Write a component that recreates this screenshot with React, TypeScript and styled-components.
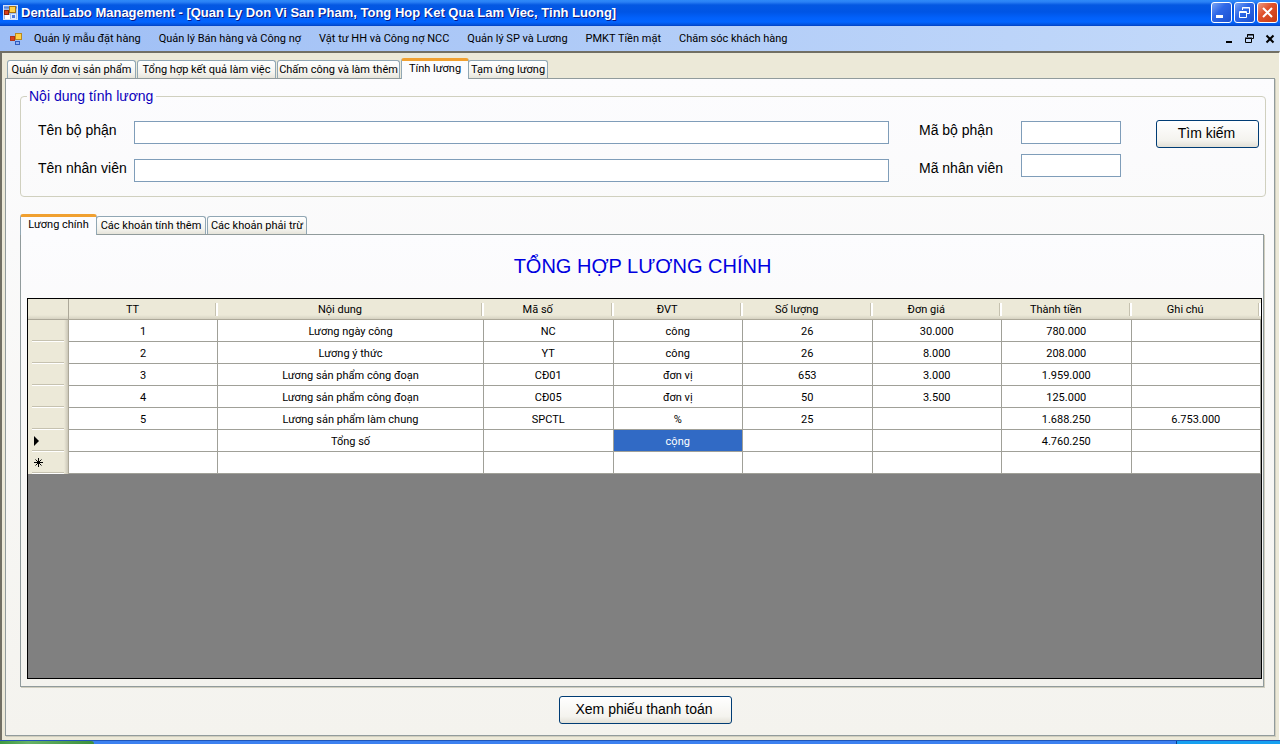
import React from 'react';
import styled, { createGlobalStyle, css } from 'styled-components';

const GlobalStyle = createGlobalStyle`
  * { box-sizing: border-box; }
  body {
    margin: 0;
    background: #ece9d8;
    color: #000;
    font-family: Roboto, "Liberation Sans", Arial, sans-serif;
    font-size: 11px;
    line-height: 14px;
  }
  button, input { font-family: inherit; color: inherit; }
`;

const Window = styled.div`
  min-height: 100vh;
  display: flex;
  flex-direction: column;
`;

const TitleBar = styled.header`
  display: flex;
  align-items: center;
  height: 26px;
  padding: 0 2px 1px 3px;
  color: #fff;
  background: linear-gradient(#2f8af8 0, #2a80f5 2px, #0458e2 5px, #0055e5 12px, #0261fb 18px, #0265ff 22px, #0350d8 25px, #003ec0 26px);
`;

const Title = styled.h1`
  flex: 1;
  margin: 0 0 0 3px;
  font-family: "Liberation Sans", Arial, sans-serif;
  font-size: 13px;
  font-weight: 700;
  line-height: 16px;
  white-space: nowrap;
  text-shadow: 1px 1px 0 #0a1883;
`;

const CaptionButtons = styled.div`
  display: flex;
  gap: 2px;
`;

const CaptionButton = styled.button<{ $danger?: boolean }>`
  display: flex;
  width: 21px;
  height: 21px;
  padding: 0;
  border: 1px solid #fff;
  border-radius: 3px;
  background: ${(p) =>
    p.$danger
      ? 'linear-gradient(135deg, #eb9a83, #e0522c 40%, #c63a12)'
      : 'linear-gradient(135deg, #7ba5f4, #2f68e8 40%, #1b50cf)'};
`;

const MenuBar = styled.nav`
  display: flex;
  align-items: center;
  height: 25px;
  padding: 0 4px 0 8px;
  background: linear-gradient(90deg, #9ebef5, #c4dafa);
`;

const MenuItems = styled.div`
  display: flex;
  flex: 1;
  gap: 18px;
  margin-left: 10px;
`;

const MenuLink = styled.a`
  color: #000;
  text-decoration: none;
  white-space: nowrap;
`;

const MdiButtons = styled.div`
  display: flex;
  gap: 8px;
`;

const MdiButton = styled.button`
  display: flex;
  width: 12px;
  height: 12px;
  padding: 0;
  border: 0;
  background: none;
`;

const Workspace = styled.main`
  display: flex;
  flex: 1;
  flex-direction: column;
  padding: 6px 4px 4px 3px;
  border: solid #716f64;
  border-width: 2px 1px 0 2px;
  border-right-color: #fff;
  background: #ece9d8;
`;

const TabStrip = styled.div<{ $inner?: boolean }>`
  display: flex;
  align-items: flex-end;
  height: 21px;
  margin: ${(p) => (p.$inner ? '17px 0 -1px' : '-1px 0 -1px')};
  padding-left: ${(p) => (p.$inner ? 0 : 2)}px;
`;

const Tab = styled.button<{ $width: number; $active?: boolean }>`
  width: ${(p) => p.$width}px;
  height: 19px;
  padding: 1px 0 0;
  border: 1px solid #91a7b4;
  border-bottom-color: #919b9c;
  border-radius: 3px 3px 0 0;
  background: linear-gradient(#fff, #f4f3ee 70%, #e6e4da);
  font-size: 11px;
  line-height: 14px;
  white-space: nowrap;
  & + & { margin-left: 1px; }
  ${(p) =>
    p.$active &&
    css`
      position: relative;
      height: 21px;
      padding: 0 0 2px;
      border-top: 3px solid #f0a030;
      border-bottom: 0;
      background: #fcfcfe;
      && { margin: 0 -2px 0 0; }
    `}
`;

const Page = styled.section`
  display: flex;
  flex: 1;
  flex-direction: column;
  padding: 8px 8px 11px 14px;
  border: 1px solid #919b9c;
  box-shadow: 1px 1px 0 #d0cebf;
  background: linear-gradient(#fcfcfe, #f4f3ee);
`;

const Group = styled.fieldset`
  display: flex;
  min-width: 0;
  margin: 0;
  padding: 15px 6px 14px 17px;
  border: 1px solid #d0d0bf;
  border-radius: 4px;
  font-family: "Liberation Sans", Arial, sans-serif;
  font-size: 14px;
  line-height: 20px;
`;

const Legend = styled.legend`
  margin-left: -11px;
  padding: 0 3px 0 2px;
  line-height: 18px;
  color: #0c00bc;
`;

const LabelColumn = styled.div<{ $width: number }>`
  display: flex;
  flex-direction: column;
  gap: 18px;
  width: ${(p) => p.$width}px;
  white-space: nowrap;
`;

const InputColumn = styled.div<{ $gap: number; $width?: number }>`
  display: flex;
  flex-direction: column;
  gap: ${(p) => p.$gap}px;
  padding-top: 1px;
  ${(p) => (p.$width ? `width: ${p.$width}px;` : 'flex: 1; margin-right: 30px;')}
`;

const TextInput = styled.input`
  width: 100%;
  height: 23px;
  padding: 2px 4px;
  border: 1px solid #7f9db9;
  background: #fff;
  font-size: 14px;
`;

const PushButton = styled.button<{ $width: number }>`
  width: ${(p) => p.$width}px;
  height: 28px;
  padding: 0 2px 2px 0;
  border: 1px solid #003c74;
  border-radius: 3px;
  background: linear-gradient(#fff, #f4f3ee 75%, #e2e0d6);
  font-family: "Liberation Sans", Arial, sans-serif;
  font-size: 14px;
  line-height: 20px;
  white-space: nowrap;
`;

const SearchSlot = styled.div`
  margin-left: 35px;
`;

const Lower = styled.div`
  display: flex;
  flex: 1;
  flex-direction: column;
  margin-right: 2px;
`;

const InnerPage = styled.section`
  display: flex;
  flex: 1;
  flex-direction: column;
  padding: 0 1px 7px 6px;
  border: 1px solid #919b9c;
  box-shadow: 1px 1px 0 #d0cebf;
  background: linear-gradient(#fcfcfe, #f4f3ee);
`;

const Heading = styled.h2`
  margin: 0;
  padding: 17px 4px 18px 0;
  font-family: "Liberation Sans", Arial, sans-serif;
  font-size: 20px;
  font-weight: 400;
  line-height: 28px;
  text-align: center;
  color: #0000e0;
`;

const GridArea = styled.div`
  flex: 1;
  border: 1px solid #000;
  background: #808080;
`;

const Grid = styled.table`
  width: 100%;
  table-layout: fixed;
  border-collapse: separate;
  border-spacing: 0;
`;

const ColumnHeader = styled.th`
  position: relative;
  height: 21px;
  padding: 2px 22px 0 0;
  border-bottom: 1px solid #aca899;
  background: linear-gradient(#ece9d8 16px, #d6d2c2 20px);
  font-weight: 400;
  &::after {
    content: "";
    position: absolute;
    top: 4px;
    right: 0;
    width: 2px;
    height: 13px;
    border-left: 1px solid #c6c2b0;
    background: #fff;
  }
`;

const CornerCell = styled.td`
  height: 21px;
  padding: 0;
  border-right: 1px solid #aca899;
  border-bottom: 1px solid #aca899;
  background: linear-gradient(#ece9d8 16px, #d6d2c2 20px);
`;

const RowHeader = styled.th`
  height: 22px;
  padding: 0 4px;
  border-right: 1px solid #aca899;
  background: linear-gradient(90deg, transparent 36px, #cbc7b8 40px), #ece9d8;
`;

const RowMark = styled.div`
  display: flex;
  align-items: center;
  height: 22px;
  border-bottom: 1px solid #fff;
  box-shadow: inset 0 -1px 0 #c6c2b0;
`;

const Cell = styled.td<{ $selected?: boolean }>`
  height: 22px;
  padding: 2px 0 0;
  border-right: 1px solid #a0a098;
  border-bottom: 1px solid #a0a098;
  background: ${(p) => (p.$selected ? '#316ac5' : '#fff')};
  color: ${(p) => (p.$selected ? '#fff' : '#000')};
  text-align: center;
  white-space: nowrap;
`;

const Footer = styled.footer`
  display: flex;
  justify-content: center;
  margin: 9px 0 0 4px;
`;

const Taskbar = styled.div`
  display: flex;
  height: 4px;
  border-top: 1px solid #1f55b8;
  background: #3c81f0;
`;

const StartEdge = styled.div`
  width: 94px;
  border-top-right-radius: 4px;
  background: linear-gradient(90deg, #3f9a3f, #66b266 30%, #3c913c);
`;

const TrayEdge = styled.div`
  width: 104px;
  margin-left: auto;
  border-left: 1px solid #0a3f8c;
  background: #16a0f0;
`;

const AppIcon = () => (
  <svg width="15" height="15" viewBox="0 0 15 15" aria-hidden="true">
    <rect x=".5" y=".5" width="14" height="14" fill="#9fbcee" stroke="#d5e2fa" />
    <path d="M1 2.5h13" stroke="#5586dd" strokeWidth="2" />
    <rect x="2" y="10" width="5" height="4" fill="#fff" />
    <rect x="1.5" y="5.500" width="4" height="4" fill="#d8401c" stroke="#8c2410" />
    <rect x="6.500" y="1.5" width="6" height="6" fill="#ffd24a" stroke="#a87410" />
    <rect x="8.5" y="9.5" width="4" height="4" fill="#4a78e0" stroke="#dfe8fb" />
  </svg>
);

const DocIcon = () => (
  <svg width="16" height="16" viewBox="0 0 16 16" aria-hidden="true">
    <rect x="2.5" y="5.5" width="4" height="4" fill="#d8401c" stroke="#b03418" />
    <rect x="7.5" y="2.5" width="6" height="6" fill="#ffd24a" stroke="#b88a20" />
    <rect x="7.5" y="10.5" width="4" height="3" fill="#8fb0f4" stroke="#2f5cc0" />
  </svg>
);

type Glyph = 'minimize' | 'restore' | 'close';

const captionPaths: Record<Glyph, React.ReactNode> = {
  minimize: <path d="M4 13.5h7" stroke="#fff" strokeWidth="3" />,
  restore: (
    <g fill="none" stroke="#fff">
      <path d="M7.5 7V4.5h7v6H12" />
      <path d="M7 5h8" />
      <path d="M4.500 8.500h7v6h-7zM4 9.500h8" />
    </g>
  ),
  close: <path d="M5 5l9 9M14 5l-9 9" stroke="#fff" strokeWidth="2" />,
};

const mdiPaths: Record<Glyph, React.ReactNode> = {
  minimize: <path d="M2 9h6" stroke="#000" strokeWidth="2" />,
  restore: (
    <g fill="none" stroke="#000">
      <path d="M3.500 4V1.500h6v4H8M3 2h7" />
      <path d="M1.500 5.500h6v4h-6zM1 5h7" />
    </g>
  ),
  close: <path d="M2.500 2.500l7 7M9.500 2.500l-7 7" stroke="#000" strokeWidth="2" />,
};

const glyphs: { id: Glyph; label: string }[] = [
  { id: 'minimize', label: 'Minimize' },
  { id: 'restore', label: 'Restore' },
  { id: 'close', label: 'Close' },
];

const menus = [
  'Quản lý mẫu đặt hàng',
  'Quản lý Bán hàng và Công nợ',
  'Vật tư HH và Công nợ NCC',
  'Quản lý SP và Lương',
  'PMKT Tiền mặt',
  'Chăm sóc khách hàng',
];

const mainTabs = [
  { label: 'Quản lý đơn vị sản phẩm', width: 129 },
  { label: 'Tổng hợp kết quả làm việc', width: 139 },
  { label: 'Chấm công và làm thêm', width: 123 },
  { label: 'Tính lương', width: 68, active: true },
  { label: 'Tạm ứng lương', width: 80 },
];

const salaryTabs = [
  { label: 'Lương chính', width: 77, active: true },
  { label: 'Các khoản tính thêm', width: 110 },
  { label: 'Các khoản phải trừ', width: 100 },
];

const columns = ['TT', 'Nội dung', 'Mã số', 'ĐVT', 'Số lượng', 'Đơn giá', 'Thành tiền', 'Ghi chú'];

const rows = [
  ['1', 'Lương ngày công', 'NC', 'công', '26', '30.000', '780.000', ''],
  ['2', 'Lương ý thức', 'YT', 'công', '26', '8.000', '208.000', ''],
  ['3', 'Lương sản phẩm công đoạn', 'CĐ01', 'đơn vị', '653', '3.000', '1.959.000', ''],
  ['4', 'Lương sản phẩm công đoạn', 'CĐ05', 'đơn vị', '50', '3.500', '125.000', ''],
  ['5', 'Lương sản phẩm làm chung', 'SPCTL', '%', '25', '', '1.688.250', '6.753.000'],
  ['', 'Tổng số', '', 'cộng', '', '', '4.760.250', ''],
  ['', '', '', '', '', '', '', ''],
];

const CURRENT_ROW = 5;
const NEW_ROW = 6;
const SELECTED_COLUMN = 3;

const RowGlyph = ({ row }: { row: number }) => {
  if (row === CURRENT_ROW) {
    return (
      <svg width="10" height="10" viewBox="0 0 10 10" aria-label="Current row">
        <path d="M2 0v10l5-5z" />
      </svg>
    );
  }
  if (row === NEW_ROW) {
    return (
      <svg width="11" height="11" viewBox="0 0 11 11" aria-label="New row">
        <path d="M6.500 1v9M2 5.500h9M3.500 2.500l6 6M9.500 2.500l-6 6" stroke="#000" />
      </svg>
    );
  }
  return null;
};

export default function App() {
  return (
    <Window>
      <GlobalStyle />
      <TitleBar>
        <AppIcon />
        <Title>DentalLabo Management - [Quan Ly Don Vi San Pham, Tong Hop Ket Qua Lam Viec, Tinh Luong]</Title>
        <CaptionButtons>
          {glyphs.map((g) => (
            <CaptionButton key={g.id} type="button" aria-label={g.label} $danger={g.id === 'close'}>
              <svg width="19" height="19" viewBox="0 0 19 19">{captionPaths[g.id]}</svg>
            </CaptionButton>
          ))}
        </CaptionButtons>
      </TitleBar>
      <MenuBar>
        <DocIcon />
        <MenuItems>
          {menus.map((m) => (
            <MenuLink key={m} href="#">{m}</MenuLink>
          ))}
        </MenuItems>
        <MdiButtons>
          {glyphs.map((g) => (
            <MdiButton key={g.id} type="button" aria-label={`${g.label} document`}>
              <svg width="12" height="12" viewBox="0 0 12 12">{mdiPaths[g.id]}</svg>
            </MdiButton>
          ))}
        </MdiButtons>
      </MenuBar>
      <Workspace>
        <TabStrip role="tablist">
          {mainTabs.map((t) => (
            <Tab key={t.label} type="button" role="tab" aria-selected={!!t.active} $width={t.width} $active={t.active}>
              {t.label}
            </Tab>
          ))}
        </TabStrip>
        <Page>
          <Group>
            <Legend>Nội dung tính lương</Legend>
            <LabelColumn $width={96}>
              <label htmlFor="dept-name">Tên bộ phận</label>
              <label htmlFor="staff-name">Tên nhân viên</label>
            </LabelColumn>
            <InputColumn $gap={15}>
              <TextInput id="dept-name" />
              <TextInput id="staff-name" />
            </InputColumn>
            <LabelColumn $width={102}>
              <label htmlFor="dept-code">Mã bộ phận</label>
              <label htmlFor="staff-code">Mã nhân viên</label>
            </LabelColumn>
            <InputColumn $gap={10} $width={100}>
              <TextInput id="dept-code" />
              <TextInput id="staff-code" />
            </InputColumn>
            <SearchSlot>
              <PushButton type="button" $width={103}>Tìm kiếm</PushButton>
            </SearchSlot>
          </Group>
          <Lower>
            <TabStrip role="tablist" $inner>
              {salaryTabs.map((t) => (
                <Tab key={t.label} type="button" role="tab" aria-selected={!!t.active} $width={t.width} $active={t.active}>
                  {t.label}
                </Tab>
              ))}
            </TabStrip>
            <InnerPage>
              <Heading>TỔNG HỢP LƯƠNG CHÍNH</Heading>
              <GridArea>
                <Grid>
                  <colgroup>
                    <col width="41" />
                    <col width="149" />
                    <col width="266" />
                    <col span={6} />
                  </colgroup>
                  <thead>
                    <tr>
                      <CornerCell />
                      {columns.map((c) => (
                        <ColumnHeader key={c} scope="col">{c}</ColumnHeader>
                      ))}
                    </tr>
                  </thead>
                  <tbody>
                    {rows.map((cells, r) => (
                      <tr key={r}>
                        <RowHeader scope="row">
                          <RowMark><RowGlyph row={r} /></RowMark>
                        </RowHeader>
                        {cells.map((value, c) => (
                          <Cell key={c} $selected={r === CURRENT_ROW && c === SELECTED_COLUMN}>{value}</Cell>
                        ))}
                      </tr>
                    ))}
                  </tbody>
                </Grid>
              </GridArea>
            </InnerPage>
          </Lower>
          <Footer>
            <PushButton type="button" $width={173}>Xem phiếu thanh toán</PushButton>
          </Footer>
        </Page>
      </Workspace>
      <Taskbar>
        <StartEdge />
        <TrayEdge />
      </Taskbar>
    </Window>
  );
}
